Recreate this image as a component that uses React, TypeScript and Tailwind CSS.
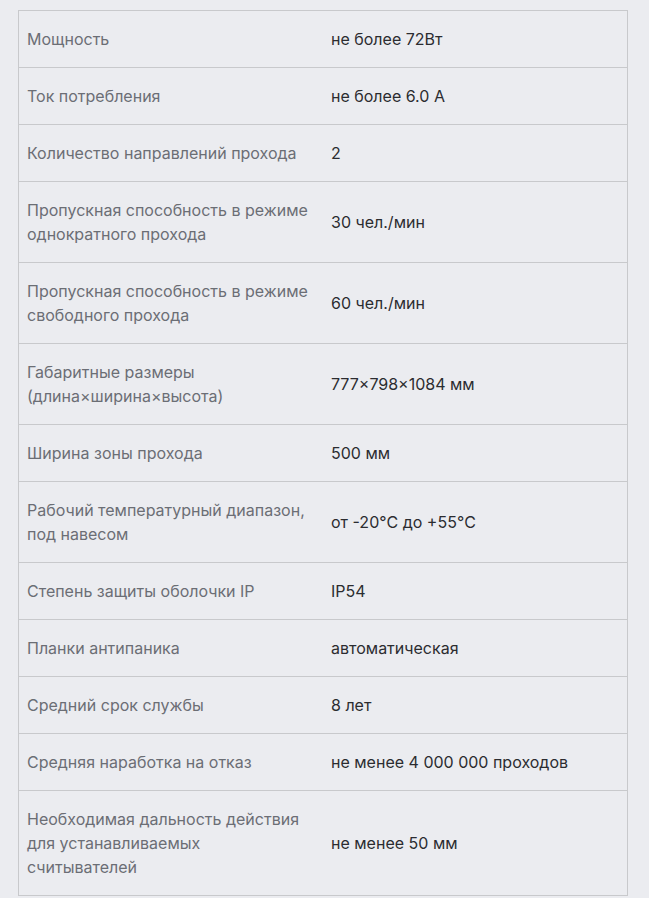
const rows: [string, string][] = [
  ["Мощность", "не более 72Вт"],
  ["Ток потребления", "не более 6.0 А"],
  ["Количество направлений прохода", "2"],
  ["Пропускная способность в режиме однократного прохода", "30 чел./мин"],
  ["Пропускная способность в режиме свободного прохода", "60 чел./мин"],
  ["Габаритные размеры (длина×ширина×высота)", "777×798×1084 мм"],
  ["Ширина зоны прохода", "500 мм"],
  ["Рабочий температурный диапазон, под навесом", "от -20°C до +55°C"],
  ["Степень защиты оболочки IP", "IP54"],
  ["Планки антипаника", "автоматическая"],
  ["Средний срок службы", "8 лет"],
  ["Средняя наработка на отказ", "не менее 4 000 000 проходов"],
  ["Необходимая дальность действия для устанавливаемых считывателей", "не менее 50 мм"],
];

export default function App() {
  return (
    <div className="min-h-[898px] bg-[#ebecf0] px-[18px] pt-[10px] font-['Inter','Roboto',sans-serif] text-base leading-6">
      <table className="w-[610px] table-fixed border-collapse border border-[#c8c9cc]">
        <tbody>
          {rows.map(([label, value]) => (
            <tr key={label} className="border-b border-[#c8c9cc]">
              <td className="w-1/2 py-4 pl-2 pr-3 align-middle text-[#6b6e75]">{label}</td>
              <td className="w-1/2 px-2 py-4 align-middle text-[#2b2c30]">{value}</td>
            </tr>
          ))}
        </tbody>
      </table>
    </div>
  );
}
